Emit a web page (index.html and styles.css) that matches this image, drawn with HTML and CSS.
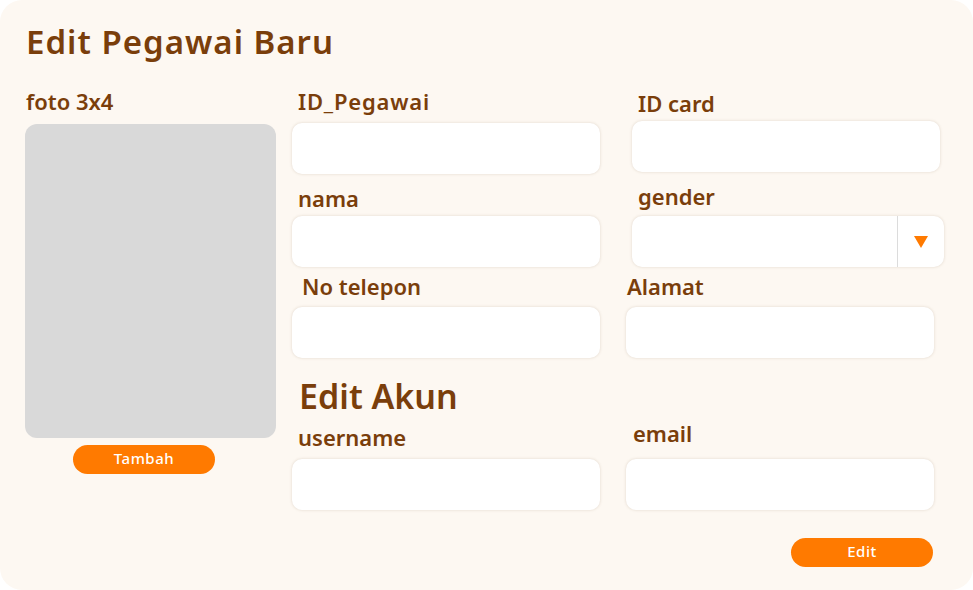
FILE: index.html
```html
<!DOCTYPE html>
<html lang="id">
<head>
<meta charset="utf-8">
<title>Edit Pegawai Baru</title>
<link rel="stylesheet" href="styles.css">
</head>
<body>
<div class="card">
  <h1 class="title">Edit Pegawai Baru</h1>
  <div class="main">
    <div class="photo-col">
      <div class="label">foto 3x4</div>
      <div class="photo"></div>
      <button class="btn btn-tambah">Tambah</button>
    </div>
    <div class="form">
      <div class="row">
        <div class="field">
          <div class="label pl6 r1a wide">ID_Pegawai</div>
          <div class="input r1a-in"></div>
        </div>
        <div class="field shift">
          <div class="label pl6 r1b">ID card</div>
          <div class="input r1b-in"></div>
        </div>
      </div>
      <div class="row">
        <div class="field">
          <div class="label pl6 r2a">nama</div>
          <div class="input r2a-in"></div>
        </div>
        <div class="field shift">
          <div class="label pl6 r2b">gender</div>
          <div class="input select r2b-in">
            <div class="select-btn"><span class="tri"></span></div>
          </div>
        </div>
      </div>
      <div class="row">
        <div class="field">
          <div class="label pl10 r3">No telepon</div>
          <div class="input r3-in"></div>
        </div>
        <div class="field">
          <div class="label pl1 r3">Alamat</div>
          <div class="input r3-in"></div>
        </div>
      </div>
      <h2 class="subtitle">Edit Akun</h2>
      <div class="row">
        <div class="field">
          <div class="label pl6 r4a">username</div>
          <div class="input r4a-in"></div>
        </div>
        <div class="field">
          <div class="label pl7 r4b">email</div>
          <div class="input r4b-in"></div>
        </div>
      </div>
      <div class="actions">
        <button class="btn btn-edit">Edit</button>
      </div>
    </div>
  </div>
</div>
</body>
</html>
```
FILE: styles.css
```css
* { box-sizing: border-box; }
html, body { margin: 0; padding: 0; background: #ffffff; }
body { font-family: "Noto Sans", "DejaVu Sans", sans-serif; color: #7a3e0b; }

.card {
  width: 973px;
  height: 590px;
  background: #fdf8f2;
  border-radius: 22px;
  padding: 22px 0 0 25px;
}

.title {
  margin: 0 0 0 1px;
  font-size: 33px;
  line-height: 40px;
  font-weight: 600;
  letter-spacing: 1px;
}

.main {
  display: flex;
  gap: 16px;
  margin-top: 27px;
}

.label {
  font-size: 22px;
  line-height: 24px;
  font-weight: 600;
  white-space: nowrap;
}
.label.wide { letter-spacing: 0.8px; }

.photo-col { width: 251px; display: flex; flex-direction: column; }
.photo-col .label { padding-left: 1px; }
.photo {
  margin-top: 11px;
  width: 251px;
  height: 314px;
  background: #d9d9d9;
  border-radius: 12px;
}

.btn {
  border: none;
  background: #ff7a00;
  color: #ffffff;
  font-family: "Noto Sans", "DejaVu Sans", sans-serif;
  font-size: 15px;
  font-weight: 500;
  letter-spacing: 0.5px;
  height: 29px;
  width: 142px;
  border-radius: 15px;
  padding: 0 0 3px 0;
}
.btn-tambah { margin-top: 7px; margin-left: 48px; }

.form { width: 642px; display: flex; flex-direction: column; }
.row {
  display: grid;
  grid-template-columns: 308px 308px;
  column-gap: 26px;
  align-items: start;
}
.field { display: flex; flex-direction: column; }
.field.shift { margin-left: 6px; }

.pl1 { padding-left: 1px; }
.pl6 { padding-left: 6px; }
.pl7 { padding-left: 7px; }
.pl10 { padding-left: 10px; }

.input {
  width: 308px;
  height: 51px;
  background: #ffffff;
  border-radius: 10px;
  box-shadow: 0 0 3px rgba(120, 90, 60, 0.22);
}

.r1b { margin-top: 2px; }
.r1a-in { margin-top: 10px; }
.r1b-in { margin-top: 6px; }

.r2a { margin-top: 12px; }
.r2b { margin-top: 10px; }
.r2a-in { margin-top: 6px; }
.r2b-in { margin-top: 8px; }

.r3 { margin-top: 7px; }
.r3-in { margin-top: 9px; }

.subtitle {
  margin: 18px 0 0 7px;
  font-size: 34px;
  line-height: 40px;
  font-weight: 600;
}

.r4a { margin-top: 9px; }
.r4b { margin-top: 5px; }
.r4a-in { margin-top: 10px; }
.r4b-in { margin-top: 14px; }

.select {
  width: 312px;
  display: flex;
  justify-content: flex-end;
}
.select-btn {
  width: 47px;
  height: 100%;
  border-left: 1px solid #dcdcdc;
  display: flex;
  align-items: center;
  justify-content: center;
}
.tri {
  width: 0;
  height: 0;
  border-left: 7.5px solid transparent;
  border-right: 7.5px solid transparent;
  border-top: 12px solid #ff7a00;
}

.actions {
  display: flex;
  justify-content: flex-end;
  margin-top: 28px;
  padding-right: 1px;
}
```
